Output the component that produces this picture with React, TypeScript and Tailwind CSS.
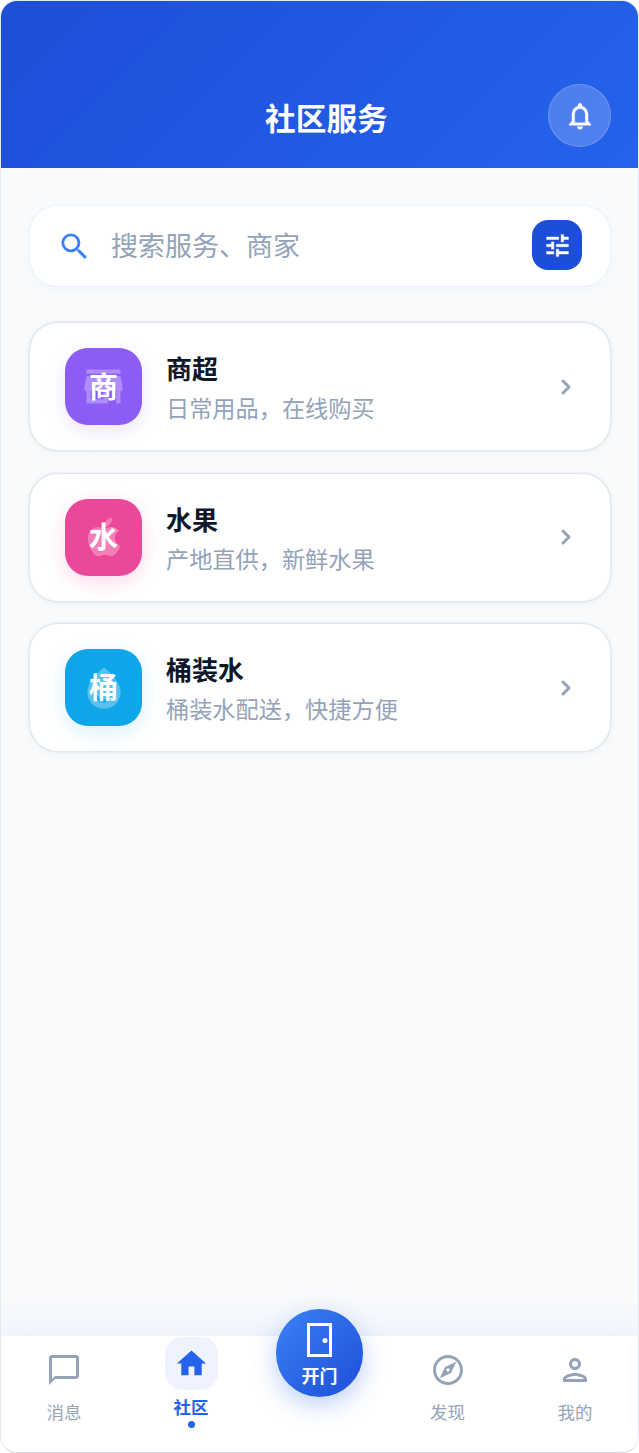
import React from 'react';
import {
  MdOutlineChatBubbleOutline,
  MdHome,
  MdOutlineExplore,
  MdOutlinePerson,
  MdSearch,
  MdStore,
  MdWaterDrop,
} from 'react-icons/md';
import { FaApple } from 'react-icons/fa';
import { ChevronRight } from 'lucide-react';

const services = [
  { name: '商超', desc: '日常用品，在线购买', char: '商', bg: 'bg-[#8b5cf6]', glow: 'shadow-[0_6px_20px_rgba(139,92,246,0.16)]', Icon: MdStore, size: 'w-[51px] h-[51px]' },
  { name: '水果', desc: '产地直供，新鲜水果', char: '水', bg: 'bg-[#ec4899]', glow: 'shadow-[0_6px_20px_rgba(236,72,153,0.2)]', Icon: FaApple, size: 'w-[44px] h-[44px]' },
  { name: '桶装水', desc: '桶装水配送，快捷方便', char: '桶', bg: 'bg-[#0ea5e9]', glow: 'shadow-[0_6px_20px_rgba(14,165,233,0.16)]', Icon: MdWaterDrop, size: 'w-[50px] h-[50px]' },
];

function NavItem({ label, Icon }: { label: string; Icon: React.ComponentType<{ className?: string }> }) {
  return (
    <div className="flex flex-col items-center pt-[16px]">
      <Icon className="w-[36px] h-[36px] text-[#94a3b8]" />
      <span className="mt-[13px] text-[17.5px] leading-[24px] text-[#94a3b8]">{label}</span>
    </div>
  );
}

export default function App() {
  return (
    <div
      className="relative w-[639px] h-[1453px] flex flex-col overflow-hidden rounded-[17px] border border-[#e2e8f0] border-b-[#d1d5db] bg-[#f8fafc]"
      style={{ fontFamily: '"Inter", "Noto Sans CJK SC", sans-serif' }}
    >
      <header className="h-[167px] shrink-0 bg-[linear-gradient(135deg,#1d4ed8,#2563eb)] flex items-end justify-between pl-[264px] pr-[27px] pb-[21px]">
        <h1 className="text-[30.7px] leading-[40px] font-bold text-white mb-[8px]">社区服务</h1>
        <button className="w-[63px] h-[63px] rounded-full bg-white/20 border border-white/20 flex items-center justify-center">
          <svg viewBox="0 0 24 24" className="w-[32px] h-[32px]" fill="white" stroke="white" strokeWidth="0.3">
            <path d="M12 22c1.1 0 2-.9 2-2h-4c0 1.1.9 2 2 2zm6-6v-5c0-3.07-1.63-5.64-4.5-6.32V4c0-.83-.67-1.5-1.5-1.5s-1.5.67-1.5 1.5v.68C7.64 5.36 6 7.92 6 11v5l-2 2v1h16v-1l-2-2zm-2 1H8v-6c0-2.48 1.51-4.5 4-4.5s4 2.02 4 4.5v6z" />
          </svg>
        </button>
      </header>

      <main className="flex-1 px-[28px] pr-[27px] pt-[37px]">
        <div className="h-[82px] rounded-[29px] bg-white border border-[#e9f2fe] shadow-[0_2px_8px_rgba(37,99,235,0.03)] flex items-center pl-[29px] pr-[28px]">
          <MdSearch className="w-[35px] h-[35px] text-[#3b82f6] shrink-0 -ml-[2px]" />
          <span className="ml-[19px] mt-[2px] flex-1 text-[27px] leading-[36px] text-[#94a3b8]">搜索服务、商家</span>
          <button className="w-[50px] h-[50px] rounded-[16px] bg-[#1d4ed8] flex items-center justify-center -mt-[2px]">
            <svg viewBox="0 0 24 24" className="w-[29px] h-[29px]" fill="white" stroke="white" strokeWidth="0.4">
              <path d="M3 17v2h6v-2H3zM3 5v2h10V5H3zm10 16v-2h8v-2h-8v-2h-2v6h2zM7 9v2H3v2h4v2h2V9H7zm14 4v-2H11v2h10zm-6-4h2V7h4V5h-4V3h-2v6z" />
            </svg>
          </button>
        </div>

        <div className="mt-[35px] flex flex-col gap-[21.5px]">
          {services.map(({ name, desc, char, bg, glow, Icon, size }) => (
            <div
              key={name}
              className="h-[129px] rounded-[29px] bg-white border border-[#dfe6ef] shadow-[0_0_0_1px_rgba(226,232,240,0.5),0_2px_8px_rgba(15,23,42,0.04)] flex items-center pl-[35px] pr-[32px]"
            >
              <div className={`relative w-[77px] h-[77px] rounded-[23px] shrink-0 flex items-center justify-center ${bg} ${glow}`}>
                <Icon className={`absolute text-white/30 ${size}`} />
                <span className="relative mt-[2px] text-[29px] leading-[40px] font-bold text-white">{char}</span>
              </div>
              <div className="ml-[24px] flex-1 flex flex-col pt-[4px]">
                <span className="text-[26px] leading-[36px] font-bold text-[#0f172a]">{name}</span>
                <span className="mt-[5px] text-[23.2px] leading-[32px] text-[#94a3b8]">{desc}</span>
              </div>
              <ChevronRight className="w-[24px] h-[24px] text-[#94a3b8]" strokeWidth={3} />
            </div>
          ))}
        </div>
      </main>

      <nav className="relative h-[116px] shrink-0 bg-white shadow-[0_-8px_32px_rgba(37,99,235,0.07)] grid grid-cols-[126px_128px_129px_127px_128px]">
        <NavItem label="消息" Icon={MdOutlineChatBubbleOutline} />
        <div className="flex flex-col items-center pt-[1px]">
          <div className="w-[53px] h-[53px] rounded-[17px] bg-[#eff3fe] flex items-center justify-center">
            <MdHome className="w-[35px] h-[35px] text-[#2563eb]" />
          </div>
          <span className="mt-[6px] text-[17.5px] leading-[24px] font-bold text-[#2563eb]">社区</span>
          <span className="mt-[1px] w-[7px] h-[7px] rounded-full bg-[#2563eb]" />
        </div>
        <div />
        <NavItem label="发现" Icon={MdOutlineExplore} />
        <NavItem label="我的" Icon={MdOutlinePerson} />

        <button className="absolute left-[275px] top-[-27px] w-[87px] h-[88px] rounded-full bg-[linear-gradient(135deg,#3b82f6,#1d4ed8)] shadow-[0_8px_24px_rgba(37,99,235,0.3)] flex flex-col items-center pt-[14px]">
          <svg viewBox="0 0 25 34" className="w-[25px] h-[34px]" fill="none">
            <rect x="1.5" y="1.5" width="22" height="31" stroke="white" strokeWidth="3" />
            <circle cx="18" cy="17.5" r="2.5" fill="white" />
          </svg>
          <span className="mt-[8px] text-[18px] leading-[24px] font-bold text-white">开门</span>
        </button>
      </nav>
    </div>
  );
}
